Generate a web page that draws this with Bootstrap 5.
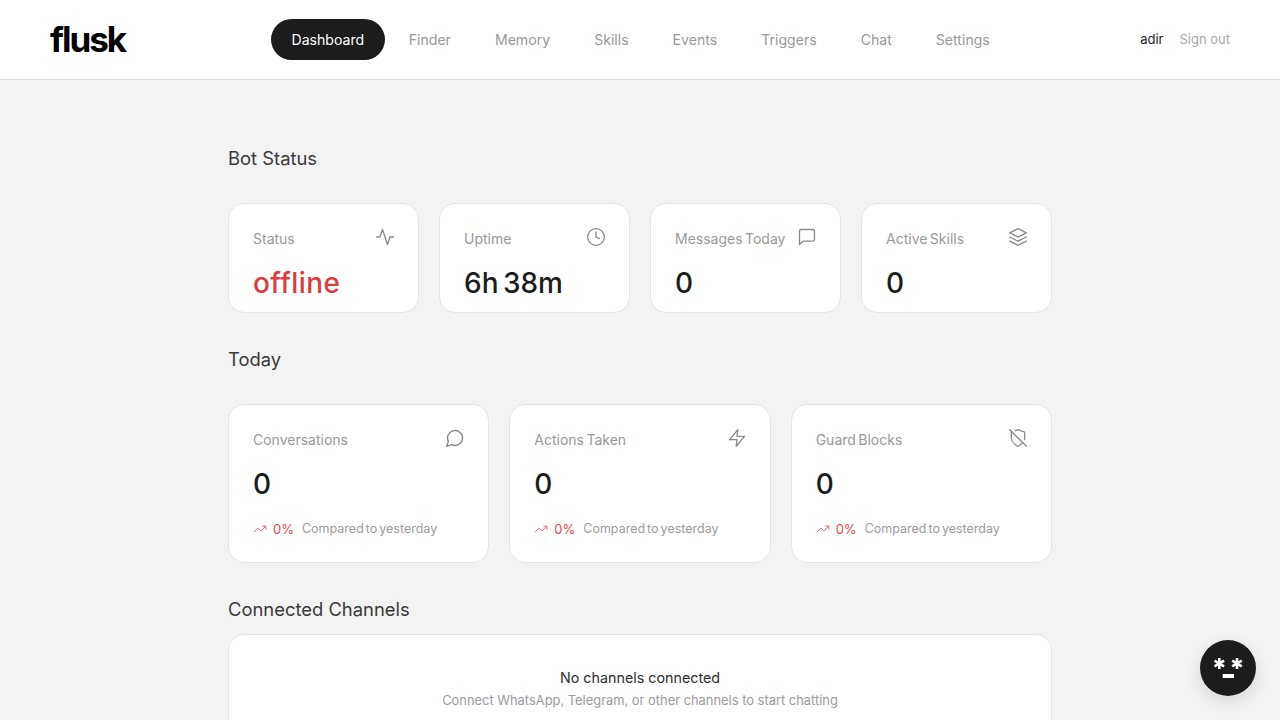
<!DOCTYPE html>
<html lang="en">
<head>
    <meta charset="UTF-8">
    <meta name="viewport" content="width=device-width, initial-scale=1.0">
    <title>Flusk Dashboard</title>
    <link href="https://cdn.jsdelivr.net/npm/bootstrap@5.3.2/dist/css/bootstrap.min.css" rel="stylesheet">
    <style>
        body {
            background: #f3f3f3;
            font-family: "Inter", "Liberation Sans", sans-serif;
            color: #1c1c1c;
        }
        .top-bar {
            height: 80px;
            background: #fff;
            border-bottom: 1px solid #e0e0e0;
            padding: 0 50px;
        }
        .brand-logo {
            width: 221px;
            font-size: 35px;
            font-weight: 700;
            letter-spacing: -2px;
            color: #000;
            line-height: 1;
            text-decoration: none;
        }
        .main-links { gap: 4px; }
        .main-links a {
            display: block;
            padding: 10px 20px;
            height: 41px;
            border-radius: 21px;
            font-size: 14.1px;
            line-height: 21px;
            color: #999;
            text-decoration: none;
        }
        .main-links a.on {
            background: #1c1c1c;
            color: #fff;
            padding: 10px 20.5px;
        }
        .user-name { font-size: 13px; color: #1c1c1c; }
        .sign-out { font-size: 13px; color: #a8a8a8; text-decoration: none; }
        .page-body {
            width: 824px;
            margin: 0 auto;
            padding-top: 65px;
        }
        .block-title {
            font-size: 18.4px;
            line-height: 27px;
            font-weight: 400;
            color: #3a3a3a;
            margin: 0 0 31px;
        }
        .block-title.later { margin-top: 33px; }
        .block-title.tight { margin-bottom: 11px; }
        .stat-row { --bs-gutter-x: 20px; }
        .stat-box {
            background: #fff;
            border: 1px solid #e4e4e4;
            border-radius: 16px;
            padding: 24px 24px 11px;
        }
        .stat-label {
            font-size: 14px;
            line-height: 21px;
            color: #999;
            word-spacing: -1.5px;
        }
        .stat-icon {
            width: 20px;
            height: 20px;
            margin: -1px -1px 0 0;
            fill: none;
            stroke: #8a8a8a;
            stroke-width: 1.6;
            stroke-linecap: round;
            stroke-linejoin: round;
            flex: none;
        }
        .stat-value {
            font-size: 28px;
            line-height: 35px;
            font-weight: 500;
            margin-top: 17px;
            color: #1c1c1c;
            word-spacing: -3px;
        }
        .stat-value.bad { color: #dc3c3c; letter-spacing: 0.4px; }
        .trend-line {
            margin: 17px 0 12px;
            font-size: 12.5px;
            line-height: 20px;
            color: #9c9c9c;
            word-spacing: -1.5px;
        }
        .trend-line svg {
            width: 14px;
            height: 14px;
            fill: none;
            stroke: #e5484d;
            stroke-width: 1.4;
            margin-right: 6px;
        }
        .trend-pct { color: #e5484d; font-size: 13px; margin-right: 8px; }
        .empty-box {
            background: #fff;
            border: 1px solid #e4e4e4;
            border-radius: 16px;
            padding: 32px 24px;
            text-align: center;
        }
        .empty-title { font-size: 14.3px; line-height: 22px; font-weight: 400; color: #2e2e2e; }
        .empty-sub { font-size: 12.9px; line-height: 20px; color: #9c9c9c; margin-top: 2px; }
        .chat-fab {
            position: fixed;
            right: 24px;
            bottom: 24px;
            width: 56px;
            height: 56px;
            border: 0;
            border-radius: 50%;
            background: #1c1c1c;
            box-shadow: 0 6px 18px rgba(0,0,0,0.12);
            padding: 0;
        }
    </style>
</head>
<body>
    <nav class="top-bar d-flex align-items-center">
        <a class="brand-logo" href="#">flusk</a>
        <div class="main-links d-flex align-items-center">
            <a class="on" href="#">Dashboard</a>
            <a href="#">Finder</a>
            <a href="#">Memory</a>
            <a href="#">Skills</a>
            <a href="#">Events</a>
            <a href="#">Triggers</a>
            <a href="#">Chat</a>
            <a href="#">Settings</a>
        </div>
        <div class="ms-auto d-flex align-items-center gap-3">
            <span class="user-name">adir</span>
            <a class="sign-out" href="#">Sign out</a>
        </div>
    </nav>

    <main class="page-body">
        <h2 class="block-title">Bot Status</h2>
        <div class="row stat-row">
            <div class="col-3">
                <div class="stat-box">
                    <div class="d-flex justify-content-between align-items-start">
                        <span class="stat-label">Status</span>
                        <svg class="stat-icon" viewBox="0 0 24 24"><path d="M22 12h-4l-3 9L9 3l-3 9H2"/></svg>
                    </div>
                    <div class="stat-value bad">offline</div>
                </div>
            </div>
            <div class="col-3">
                <div class="stat-box">
                    <div class="d-flex justify-content-between align-items-start">
                        <span class="stat-label">Uptime</span>
                        <svg class="stat-icon" viewBox="0 0 24 24"><circle cx="12" cy="12" r="10"/><path d="M12 6v6l4 2"/></svg>
                    </div>
                    <div class="stat-value">6h 38m</div>
                </div>
            </div>
            <div class="col-3">
                <div class="stat-box">
                    <div class="d-flex justify-content-between align-items-start">
                        <span class="stat-label">Messages Today</span>
                        <svg class="stat-icon" viewBox="0 0 24 24"><path d="M21 15a2 2 0 0 1-2 2H7l-4 4V5a2 2 0 0 1 2-2h14a2 2 0 0 1 2 2z"/></svg>
                    </div>
                    <div class="stat-value">0</div>
                </div>
            </div>
            <div class="col-3">
                <div class="stat-box">
                    <div class="d-flex justify-content-between align-items-start">
                        <span class="stat-label">Active Skills</span>
                        <svg class="stat-icon" viewBox="0 0 24 24"><path d="M12 2 2 7l10 5 10-5-10-5z"/><path d="m2 12 10 5 10-5"/><path d="m2 17 10 5 10-5"/></svg>
                    </div>
                    <div class="stat-value">0</div>
                </div>
            </div>
        </div>

        <h2 class="block-title later">Today</h2>
        <div class="row stat-row">
            <div class="col-4">
                <div class="stat-box">
                    <div class="d-flex justify-content-between align-items-start">
                        <span class="stat-label">Conversations</span>
                        <svg class="stat-icon" viewBox="0 0 24 24"><path d="M7.9 20A9 9 0 1 0 4 16.1L2 22z"/></svg>
                    </div>
                    <div class="stat-value">0</div>
                    <div class="trend-line d-flex align-items-center">
                        <svg viewBox="0 0 24 24"><path d="m22 7-8.5 8.5-5-5L2 17"/><path d="M16 7h6v6"/></svg>
                        <span class="trend-pct">0%</span>
                        <span>Compared to yesterday</span>
                    </div>
                </div>
            </div>
            <div class="col-4">
                <div class="stat-box">
                    <div class="d-flex justify-content-between align-items-start">
                        <span class="stat-label">Actions Taken</span>
                        <svg class="stat-icon" viewBox="0 0 24 24"><path d="M13 2 3 14h9l-1 8 10-12h-9l1-8z"/></svg>
                    </div>
                    <div class="stat-value">0</div>
                    <div class="trend-line d-flex align-items-center">
                        <svg viewBox="0 0 24 24"><path d="m22 7-8.5 8.5-5-5L2 17"/><path d="M16 7h6v6"/></svg>
                        <span class="trend-pct">0%</span>
                        <span>Compared to yesterday</span>
                    </div>
                </div>
            </div>
            <div class="col-4">
                <div class="stat-box">
                    <div class="d-flex justify-content-between align-items-start">
                        <span class="stat-label">Guard Blocks</span>
                        <svg class="stat-icon" viewBox="0 0 24 24"><path d="M19.7 14a6.9 6.9 0 0 0 .3-2V5l-8-3-3.2 1.2"/><path d="m2 2 20 20"/><path d="M4.7 4.7 4 5v7c0 6 8 10 8 10a20.3 20.3 0 0 0 5.6-4.4"/></svg>
                    </div>
                    <div class="stat-value">0</div>
                    <div class="trend-line d-flex align-items-center">
                        <svg viewBox="0 0 24 24"><path d="m22 7-8.5 8.5-5-5L2 17"/><path d="M16 7h6v6"/></svg>
                        <span class="trend-pct">0%</span>
                        <span>Compared to yesterday</span>
                    </div>
                </div>
            </div>
        </div>

        <h2 class="block-title later tight">Connected Channels</h2>
        <div class="empty-box">
            <div class="empty-title">No channels connected</div>
            <div class="empty-sub">Connect WhatsApp, Telegram, or other channels to start chatting</div>
        </div>
    </main>

    <button class="chat-fab d-flex align-items-center justify-content-center" type="button" aria-label="Open chat">
        <svg width="56" height="56" viewBox="0 0 56 56" fill="none" stroke="#fff" stroke-width="2.6">
            <path d="M19.3 18v11M14.5 20.7l9.6 5.6M14.5 26.3l9.6-5.6"/>
            <path d="M37 18v11M32.2 20.7l9.6 5.6M32.2 26.3l9.6-5.6"/>
            <path d="M22.7 36H34" stroke-width="4"/>
        </svg>
    </button>

    <script src="https://cdn.jsdelivr.net/npm/bootstrap@5.3.2/dist/js/bootstrap.bundle.min.js"></script>
</body>
</html>
